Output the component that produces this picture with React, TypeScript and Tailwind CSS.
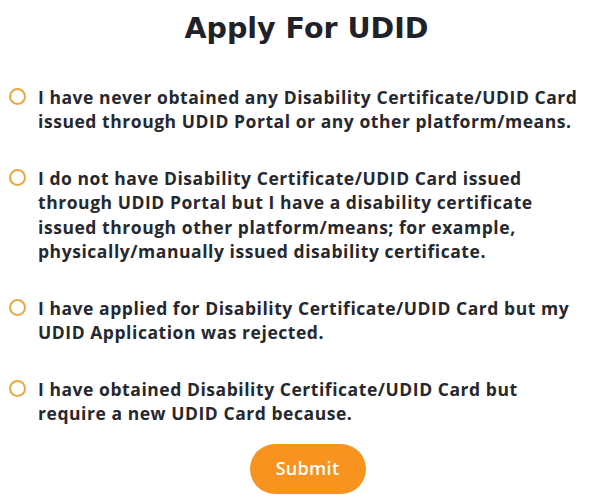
import React from "react";

const options: string[][] = [
  [
    "I have never obtained any Disability Certificate/UDID Card",
    "issued through UDID Portal or any other platform/means.",
  ],
  [
    "I do not have Disability Certificate/UDID Card issued",
    "through UDID Portal but I have a disability certificate",
    "issued through other platform/means; for example,",
    "physically/manually issued disability certificate.",
  ],
  [
    "I have applied for Disability Certificate/UDID Card but my",
    "UDID Application was rejected.",
  ],
  [
    "I have obtained Disability Certificate/UDID Card but",
    "require a new UDID Card because.",
  ],
];

export default function App() {
  return (
    <div className="w-[597px] h-[500px] bg-white overflow-hidden flex flex-col">
      <h1 className="text-center font-['DejaVu_Sans',sans-serif] font-bold text-[28.5px] leading-none text-[#1f2228] mt-[15px] pl-[16px]">
        Apply For UDID
      </h1>
      <div className="flex flex-col gap-[32px] mt-[41px] pl-[9px]">
        {options.map((lines, i) => (
          <label key={i} className="flex items-start gap-[12px] cursor-pointer">
            <span className="mt-[3px] w-[17px] h-[17px] shrink-0 rounded-full border-[2.5px] border-[#e9a93f]" />
            <span className="font-['Open_Sans',sans-serif] font-bold text-[17.5px] tracking-[0.55px] leading-[24.5px] text-[#26282f]">
              {lines.map((l, j) => (
                <React.Fragment key={j}>
                  {l}
                  {j < lines.length - 1 && <br />}
                </React.Fragment>
              ))}
            </span>
          </label>
        ))}
      </div>
      <div className="flex justify-center mt-[18px] pl-[18px]">
        <button className="w-[116px] h-[50px] rounded-full bg-[#f7931e] text-white font-['Open_Sans',sans-serif] font-semibold text-[18px] tracking-[0.3px]">
          Submit
        </button>
      </div>
    </div>
  );
}
